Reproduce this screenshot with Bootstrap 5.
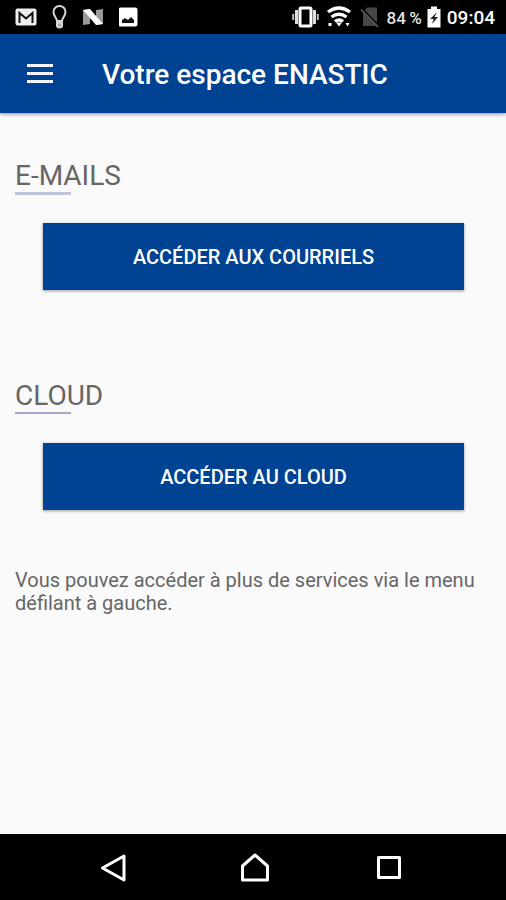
<!DOCTYPE html>
<html lang="fr">
<head>
<meta charset="utf-8">
<meta name="viewport" content="width=device-width, initial-scale=1">
<title>Votre espace ENASTIC</title>
<link href="https://cdn.jsdelivr.net/npm/bootstrap@5.3.0/dist/css/bootstrap.min.css" rel="stylesheet">
<style>
  :root { --brand: #004392; }
  body { font-family: Roboto, "Liberation Sans", sans-serif; background: #fafafa; color: #666; }
  svg { display: block; flex: none; }
  .status-bar { height: 34px; padding: 0 11px 0 15px; font-weight: 500; }
  .status-left { gap: 15px; }
  .battery-level { font-size: 17px; line-height: 20px; margin: 2px 5px 0 6px; color: #e4e4e4; }
  .clock { font-size: 19px; line-height: 24px; margin: 2px 0 0 6px; }
  .app-bar { height: 79px; padding: 0 26px; background: var(--brand); box-shadow: 0 1px 4px rgba(0,0,0,.45); }
  .app-title { font-size: 28px; line-height: 32px; font-weight: 500; margin: 2px 0 0 48px; }
  .content { padding: 46px 15px 0; }
  .service + .service { margin-top: 89px; }
  .service-title { font-size: 28px; line-height: 33px; font-weight: 400; margin: 0; }
  .service-title::after { content: ""; display: block; width: 56px; height: 3px; background: #c0c4da; }
  .service + .service .service-title::after { height: 2px; margin-bottom: 1px; background: #a3a8cc; }
  .btn-service { --bs-btn-bg: var(--brand); --bs-btn-color: #fff; --bs-btn-hover-bg: #00397d; --bs-btn-hover-color: #fff;
    --bs-btn-active-bg: #00397d; --bs-btn-active-color: #fff; height: 67px; font-size: 20px; line-height: 24px; font-weight: 500; box-shadow: 0 1px 3px rgba(0,0,0,.4); }
  .service-body { padding: 28px 27px 0 28px; }
  .hint { font-size: 20px; line-height: 23px; margin: 59px 0 0; }
  .system-nav { height: 66px; padding: 0 96px 0 85px; }
</style>
<script defer src="https://cdn.jsdelivr.net/npm/bootstrap@5.3.0/dist/js/bootstrap.bundle.min.js"></script>
</head>
<body class="min-vh-100 d-flex flex-column">
<div class="status-bar bg-black text-white d-flex align-items-center justify-content-between">
  <div class="status-left d-flex align-items-center">
    <svg width="22" height="18" viewBox="0 0 22 18" role="img" aria-label="Courriel"><rect x=".5" y=".5" width="21" height="17" rx="2" fill="#eee"/><path d="M4.500 15V5l6.500 5.500L17.500 5v10" fill="none" stroke="#111" stroke-width="2"/></svg>
    <svg width="15" height="24" viewBox="0 0 15 24" fill="none" stroke="#d5d5d5" stroke-width="2" role="img" aria-label="Astuce"><path d="M5 16c0-3-3.500-5-3.500-9a6 6 0 0 1 12 0c0 4-3.500 6-3.500 9zM5 17v2.500M10 17v2.500M5 19.500l5-1.500"/><circle cx="7.500" cy="20" r="2.600" fill="#aaa"/></svg>
    <svg width="22" height="18" viewBox="0 0 22 18" role="img" aria-label="Android Nougat"><path d="M1 2l7-1v15l-7 1zM14 2l7-1v15l-7 1z" fill="#999"/><path d="M1 2l7-1 13 15-7 1z" fill="#fff"/></svg>
    <svg width="20" height="20" viewBox="1 0 20 20" role="img" aria-label="Image"><rect x=".5" y=".5" width="19" height="19" rx="2" fill="#fff"/><path d="M4 16v-3l3-2 3 2 3-3 3 3v3z" fill="#111"/></svg>
  </div>
  <div class="d-flex align-items-center">
    <svg width="27" height="22" viewBox="0 0 27 22" role="img" aria-label="Vibreur"><rect x="8" y="2" width="11" height="18" rx="1" fill="none" stroke="#fff" stroke-width="3"/><path d="M4.500 4v14M22.500 4v14" stroke="#ddd" stroke-width="3"/><path d="M1.200 8v6M25.800 8v6" stroke="#bbb" stroke-width="2"/></svg>
    <svg class="ms-2" width="24" height="22" viewBox="0 0 24 22" role="img" aria-label="Wi-Fi"><g fill="none" stroke="#fff" stroke-width="3.400"><path d="M1 6q11-8 22 0M4.500 11q7.500-5.500 15 0M8 15.500q4-3 8 0"/></g><path d="M9 16.500h6l-3 4zM1.500 17h3v3h-3zM18.500 17h4l-2 3.500z" fill="#fff"/></svg>
    <svg class="ms-2" width="21" height="22" viewBox="-1 0 21 22" role="img" aria-label="Pas de carte SIM"><path d="M7 1.500h10V20H3V6z" fill="#474747"/><path d="M1.500 3L19 21" stroke="#000" stroke-width="3"/><path d="M1 3.500L18 21" stroke="#666" stroke-width="1.500"/></svg>
    <span class="battery-level text-nowrap">84&#8201;%</span>
    <svg width="14" height="22" viewBox="0 0 14 22" role="img" aria-label="Batterie en charge"><path d="M4 .5h6V3h3.500v18.500H.5V3H4z" fill="#fff"/><path d="M10 6l-7 7h3.500L5 18l6-7H7.500z" fill="#222"/></svg>
    <span class="clock">09:04</span>
  </div>
</div>
<header class="app-bar text-white d-flex align-items-center">
  <button class="btn p-0 border-0 rounded-0 text-white" type="button" aria-label="Menu">
    <svg width="28" height="22" viewBox="0 0 28 22" fill="#f4f4ff"><path d="M1 1h26v3H1zM1 9h26v3H1zM1 17h26v3H1z"/></svg>
  </button>
  <h1 class="app-title">Votre espace ENASTIC</h1>
</header>
<main class="content flex-grow-1">
  <section class="service">
    <h2 class="service-title">E-MAILS</h2>
    <div class="service-body"><button class="btn btn-service w-100 border-0 rounded-0" type="button">ACCÉDER AUX COURRIELS</button></div>
  </section>
  <section class="service">
    <h2 class="service-title">CLOUD</h2>
    <div class="service-body"><button class="btn btn-service w-100 border-0 rounded-0" type="button">ACCÉDER AU CLOUD</button></div>
  </section>
  <p class="hint">Vous pouvez accéder à plus de services via le menu défilant à gauche.</p>
</main>
<nav class="system-nav bg-black d-flex align-items-center justify-content-between" aria-label="Navigation système">
  <button class="btn p-2 border-0 text-white" type="button" aria-label="Retour"><svg width="40" height="30" viewBox="0 0 40 30" fill="none" stroke="#fff" stroke-width="3" stroke-linejoin="round"><path d="M9.500 16L31 4v24z"/></svg></button>
  <button class="btn p-2 border-0 text-white" type="button" aria-label="Accueil"><svg width="30" height="30" viewBox="0 0 30 30" fill="none" stroke="#fff" stroke-width="3" stroke-linejoin="round"><path d="M2.500 14L15 3l12.500 11v14h-25z"/></svg></button>
  <button class="btn p-2 border-0 text-white" type="button" aria-label="Applications récentes"><svg width="26" height="30" viewBox="0 0 26 30" fill="none" stroke="#fff" stroke-width="3" stroke-linejoin="round"><rect x="2.500" y="5.500" width="21" height="20"/></svg></button>
</nav>
</body>
</html>
